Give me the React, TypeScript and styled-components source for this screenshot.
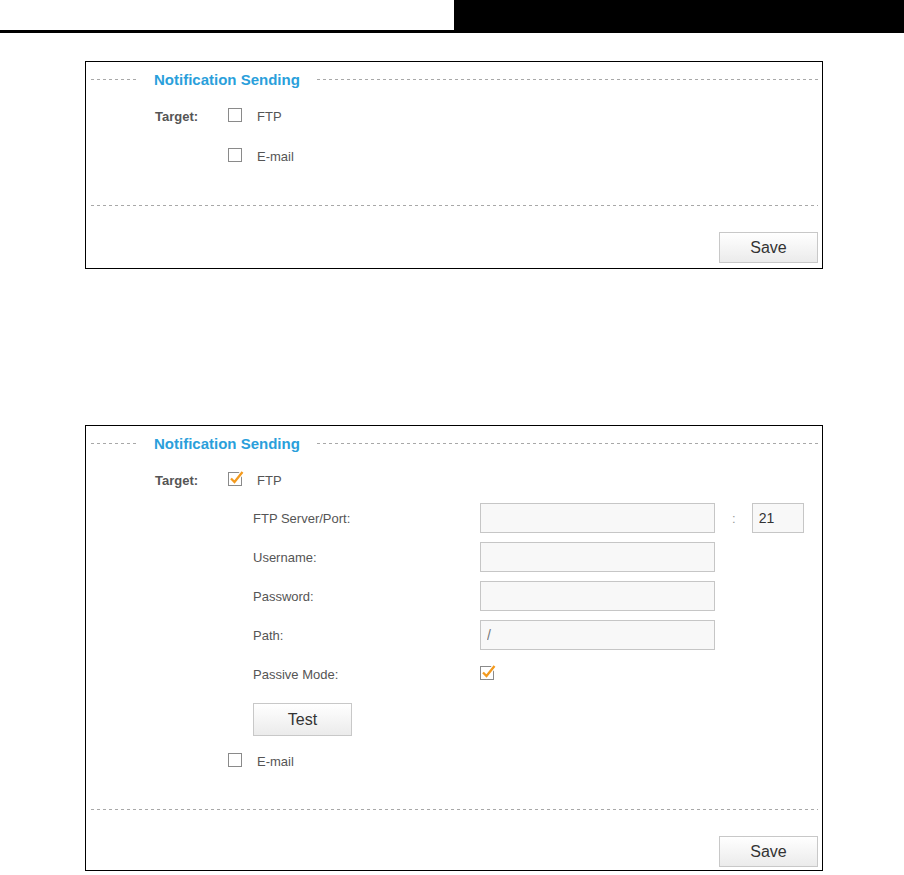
import styled, { createGlobalStyle } from "styled-components";

const GlobalStyle = createGlobalStyle`
  body {
    margin: 0;
    background: #fff;
    font-family: "Liberation Sans", Arial, sans-serif;
  }
`;

const CheckBox = ({ checked }: { checked?: boolean }) => (
  <BoxIcon width="18" height="18" viewBox="0 0 18 18">
    <rect x="0.5" y="3.5" width="13" height="13" fill="#fff" stroke="#8a8a8a" />
    {checked && (
      <>
        <path d="M3 9.5 L6.5 13 L14.5 3" fill="none" stroke="#fff" strokeWidth="4.5" />
        <path d="M3 9.5 L6.5 13 L14.5 3" fill="none" stroke="#f39a1e" strokeWidth="2.3" />
      </>
    )}
  </BoxIcon>
);

const Panel = ({
  children,
  top,
  bottom,
}: {
  children: React.ReactNode;
  top: number;
  bottom: number;
}) => (
  <Card $mt={top}>
    <Legend>
      <Dash $w={48} />
      <LegendTitle>Notification Sending</LegendTitle>
      <Dash />
    </Legend>
    {children}
    <Footer $pb={bottom}>
      <Button $w={99} $h={31}>Save</Button>
    </Footer>
  </Card>
);

const fields = [
  { label: "FTP Server/Port:", value: "", port: true },
  { label: "Username:", value: "" },
  { label: "Password:", value: "" },
  { label: "Path:", value: "/" },
];

const App = () => {
  return (
    <>
      <GlobalStyle />
      <Header>
        <HeaderLeft />
        <HeaderRight />
      </Header>

      <Panel top={28} bottom={5}>
        <Body>
          <OptionRow>
            <TargetLabel>Target:</TargetLabel>
            <CheckBox />
            <OptionText>FTP</OptionText>
          </OptionRow>
          <OptionRow>
            <TargetLabel />
            <CheckBox />
            <OptionText>E-mail</OptionText>
          </OptionRow>
        </Body>
      </Panel>

      <Panel top={156} bottom={3}>
        <Body $pb={28}>
          <OptionRow>
            <TargetLabel>Target:</TargetLabel>
            <CheckBox checked />
            <OptionText>FTP</OptionText>
          </OptionRow>
          <SubForm>
            {fields.map((f) => (
              <FieldRow key={f.label}>
                <FieldLabel>{f.label}</FieldLabel>
                <TextInput defaultValue={f.value} />
                {f.port && (
                  <>
                    <Colon>:</Colon>
                    <PortInput defaultValue="21" />
                  </>
                )}
              </FieldRow>
            ))}
            <FieldRow>
              <FieldLabel>Passive Mode:</FieldLabel>
              <CheckBox checked />
            </FieldRow>
            <TestRow>
              <Button $w={99} $h={33}>Test</Button>
            </TestRow>
          </SubForm>
          <OptionRow>
            <TargetLabel />
            <CheckBox />
            <OptionText>E-mail</OptionText>
          </OptionRow>
        </Body>
      </Panel>
    </>
  );
};

const Header = styled.div`
  display: flex;
  height: 33px;
`;

const HeaderLeft = styled.div`
  width: 454px;
  border-bottom: 3px solid #000;
  box-sizing: border-box;
`;

const HeaderRight = styled.div`
  flex: 1;
  background: #000;
`;

const Card = styled.section<{ $mt: number }>`
  margin: ${({ $mt }) => $mt}px 0 0 85px;
  width: 738px;
  box-sizing: border-box;
  border: 1px solid #000;
  display: flex;
  flex-direction: column;
`;

const Legend = styled.div`
  display: flex;
  align-items: center;
  height: 34px;
  padding: 0 4px 0 5px;
`;

const Dash = styled.div<{ $w?: number }>`
  height: 1px;
  ${({ $w }) => ($w ? `width: ${$w}px;` : "flex: 1;")}
  background: repeating-linear-gradient(
    to right,
    #a8a8a8 0 3px,
    transparent 3px 6px
  );
`;

const LegendTitle = styled.h2`
  margin: 0 17px 0 15px;
  font-size: 15px;
  font-weight: bold;
  color: #2a9fdb;
  white-space: nowrap;
`;

const Body = styled.div<{ $pb?: number }>`
  display: flex;
  flex-direction: column;
  padding-bottom: ${({ $pb }) => $pb ?? 29}px;
`;

const OptionRow = styled.div`
  display: flex;
  align-items: center;
  height: 40px;
  padding-left: 69px;
`;

const TargetLabel = styled.span`
  width: 73px;
  font-size: 13px;
  font-weight: bold;
  color: #555;
`;

const BoxIcon = styled.svg`
  display: block;
  margin-top: -4px;
  flex: none;
`;

const OptionText = styled.span`
  margin-left: 11px;
  font-size: 13px;
  color: #555;
`;

const SubForm = styled.div`
  display: flex;
  flex-direction: column;
  gap: 9px;
  padding: 3px 0 0 167px;
`;

const FieldRow = styled.div`
  display: flex;
  align-items: center;
  height: 30px;
`;

const FieldLabel = styled.span`
  width: 227px;
  font-size: 13px;
  color: #555;
`;

const TextInput = styled.input`
  width: 235px;
  height: 30px;
  box-sizing: border-box;
  border: 1px solid #c6c6c6;
  background: #f8f8f8;
  padding: 0 6px;
  font-family: "Liberation Sans", Arial, sans-serif;
  font-size: 14px;
  color: #777;
  outline: none;
`;

const Colon = styled.span`
  margin: 0 16px 0 17px;
  font-size: 13px;
  color: #999;
`;

const PortInput = styled(TextInput)`
  width: 52px;
  padding: 0 6px;
  color: #333;
`;

const TestRow = styled.div`
  margin: 5px 0 5px;
`;

const Button = styled.button<{ $w: number; $h: number }>`
  width: ${({ $w }) => $w}px;
  height: ${({ $h }) => $h}px;
  border: 1px solid #c8c8c8;
  border-radius: 0;
  background: linear-gradient(#ffffff, #ebebeb);
  font-family: "Liberation Sans", Arial, sans-serif;
  font-size: 16px;
  color: #333;
  padding: 0;
  cursor: pointer;
`;

const Footer = styled.div<{ $pb: number }>`
  display: flex;
  justify-content: flex-end;
  margin: 0 4px 0 5px;
  padding: 27px 0 ${({ $pb }) => $pb}px;
  background: repeating-linear-gradient(
      to right,
      #a8a8a8 0 3px,
      transparent 3px 6px
    )
    top / 100% 1px no-repeat;
`;

export default App;
